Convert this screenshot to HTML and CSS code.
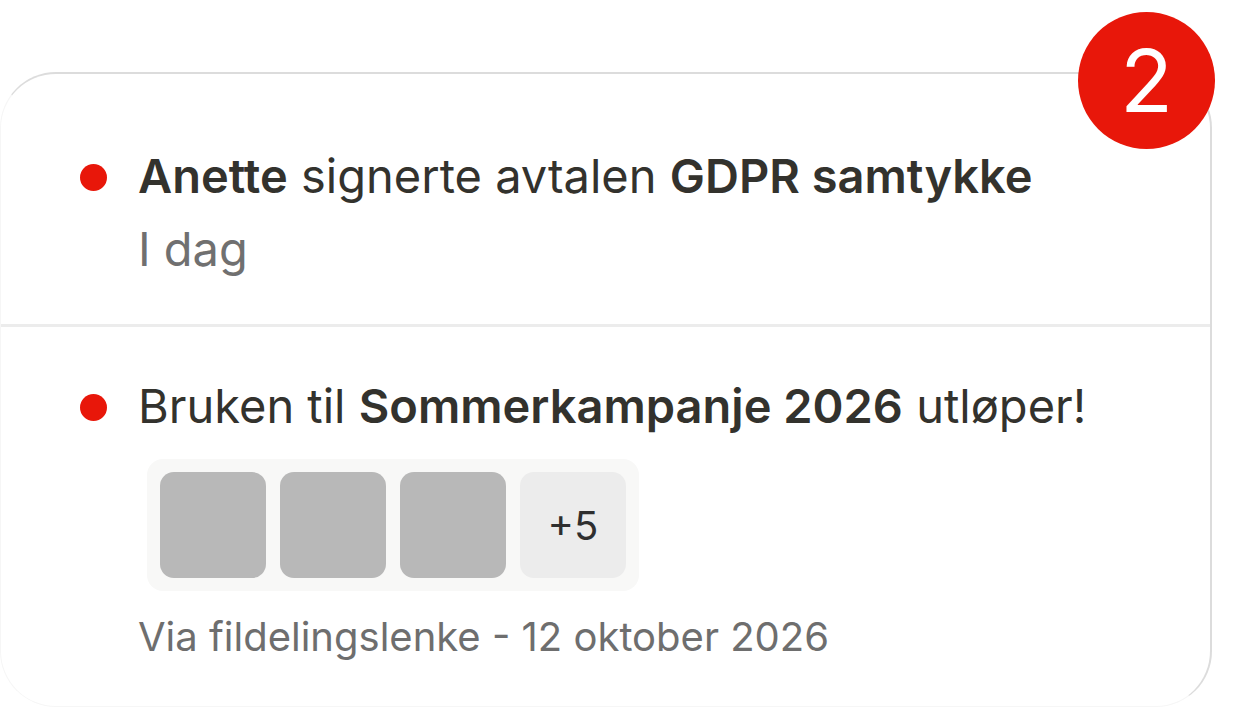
FILE: index.html
```html
<!DOCTYPE html>
<html lang="no">
<head>
  <meta charset="UTF-8">
  <meta name="viewport" content="width=device-width, initial-scale=1.0">
  <title>Varsler</title>
  <link rel="stylesheet" href="styles.css">
</head>
<body>

  <div class="card">
    <div class="badge">2</div>

    <div class="item item-first">
      <span class="dot"></span>
      <div class="item-body">
        <div class="title"><b>Anette</b> signerte avtalen <b>GDPR samtykke</b></div>
        <div class="meta">I dag</div>
      </div>
    </div>

    <div class="item item-second">
      <span class="dot"></span>
      <div class="item-body">
        <div class="title">Bruken til <b>Sommerkampanje 2026</b> utløper!</div>
        <div class="thumbs">
          <div class="thumb"></div>
          <div class="thumb"></div>
          <div class="thumb"></div>
          <div class="thumb thumb-more">+5</div>
        </div>
        <div class="meta meta-small">Via fildelingslenke - 12 oktober 2026</div>
      </div>
    </div>
  </div>

</body>
</html>
```

FILE: styles.css
```css
body {
  margin: 0;
  background: #fff;
  font-family: Inter, "Noto Sans", sans-serif;
  color: #33322d;
}
.card {
  position: relative;
  box-sizing: border-box;
  width: 1212px;
  height: 635px;
  margin-top: 72px;
  border-top: 2px solid #dcdcdc;
  border-right: 2px solid #dcdcdc;
  border-left: 1px solid #f6f6f6;
  border-bottom: 1px solid #f6f6f6;
  border-radius: 56px;
}
.badge {
  position: absolute;
  top: -62px;
  right: -5px;
  width: 137px;
  height: 137px;
  border-radius: 50%;
  background: #e8170a;
  color: #fff;
  font-size: 87px;
  display: flex;
  align-items: center;
  justify-content: center;
}
.item {
  display: flex;
  align-items: flex-start;
  gap: 31px;
  padding-left: 79px;
}
.item-first {
  padding-top: 65px;
  padding-bottom: 39px;
  border-bottom: 3px solid #ececec;
}
.item-second {
  padding-top: 42px;
}
.dot {
  flex: none;
  width: 27px;
  height: 27px;
  margin-top: 25px;
  border-radius: 50%;
  background: #e8170a;
}
.title,
.meta {
  font-size: 47px;
  line-height: 73px;
  white-space: nowrap;
}
.title b {
  font-weight: 600;
}
.meta {
  color: #707070;
}
.meta-small {
  font-size: 40px;
  line-height: 56px;
  margin-top: 18px;
  color: #6e6e6e;
}
.thumbs {
  display: flex;
  gap: 14px;
  width: max-content;
  margin: 17px 0 0 9px;
  padding: 13px;
  background: #f8f8f7;
  border-radius: 16px;
}
.thumb {
  width: 106px;
  height: 106px;
  border-radius: 14px;
  background: #b8b8b8;
}
.thumb-more {
  display: flex;
  align-items: center;
  justify-content: center;
  background: #ececec;
  font-size: 40px;
  color: #2f2f2f;
}
```
